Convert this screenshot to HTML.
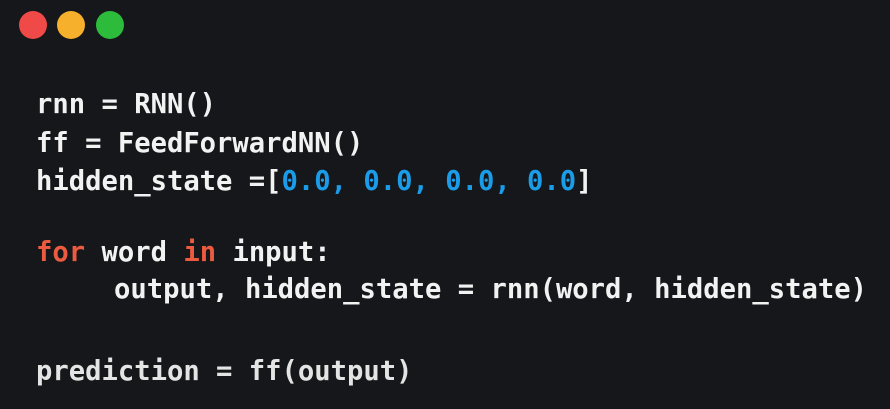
<!DOCTYPE html>
<html><head><style>
html,body{margin:0;padding:0;}
body{width:890px;height:409px;background:#16171a;position:relative;overflow:hidden;font-family:"DejaVu Sans Mono","Liberation Mono",monospace;font-weight:bold;font-size:27.2px;color:#f2f2f2;}
.c{position:absolute;width:28px;height:28px;border-radius:50%;top:11px;}
.l{position:absolute;left:36px;height:38px;line-height:38px;white-space:pre;}
.k{color:#ec5a3f;}
.n{color:#1a9ce8;}
</style></head><body>
<div class="c" style="left:19px;background:#f04a48"></div>
<div class="c" style="left:57px;background:#f6b02b"></div>
<div class="c" style="left:96px;background:#2dbb3c"></div>
<div class="l" style="top:86px">rnn = RNN()</div>
<div class="l" style="top:125px">ff = FeedForwardNN()</div>
<div class="l" style="top:163px">hidden_state =[<span class="n">0.0, 0.0, 0.0, 0.0</span>]</div>
<div class="l" style="top:234px"><span class="k">for</span> word <span class="k">in</span> input:</div>
<div class="l" style="top:271px;left:114px">output, hidden_state = rnn(word, hidden_state)</div>
<div class="l" style="top:353px;color:#e4e4e4">prediction = ff(output)</div>
</body></html>
